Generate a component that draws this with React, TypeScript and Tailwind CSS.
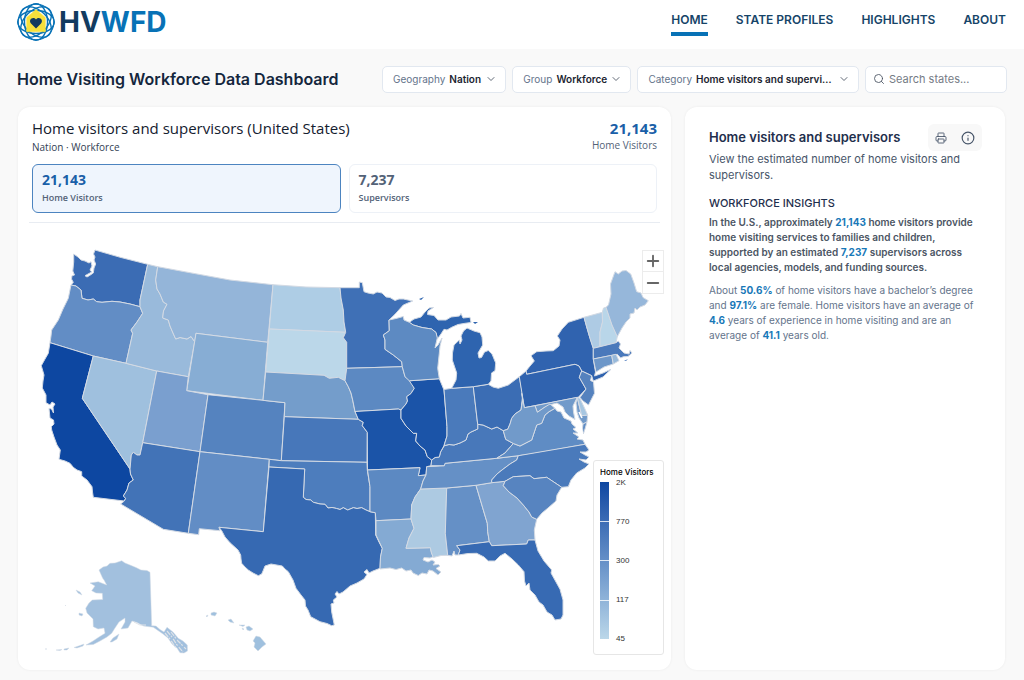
import React from "react";
import { ChevronDown, Info, Minus, Plus, Printer, Search } from "lucide-react";

type Region = { id: string; fill: string; d: string };

const regions: Region[] = [
  { id: "Washington", fill: "#3b6cb4", d: "M73.7 254L78 257 81 260 85 261 89 263 91 261.7 92 266 90 270 91.7 272 85 275.7 87 277 89.3 275.7 93.3 273 94 268 95.7 264 94 260 95 257 93.5 254 95 250 121 257.5 147.7 264.3 140 300 140 306.7 130 304 120 302 112 301.3 102 302.3 96.7 301.7 93.3 299 88 300 82 298.3 81 290 76 286 71 285 73.3 282.3 71.5 279 72 275.7 74.5 275 72.8 271 73.7 262Z" },
  { id: "Oregon", fill: "#628dc5", d: "M71 285L76 286 81 290 82 298.3 88 300 93.3 299 96.7 301.7 102 302.3 112 301.3 120 302 130 304 140 306.7 142.7 313.3 137 322 131 330 132.7 333.3 126 363.3 93.3 356 50 342.7 51 336 51.7 330 55 325 58.3 320 63 309 68.3 298.3Z" },
  { id: "California", fill: "#0d47a1", d: "M50 342.7L93.3 356 82.3 398.3 130 469 130.5 474 133.3 480 129 483 127 490 123.3 496 125.7 498.3 124.3 501 93.3 497.3 92.5 492 92 486.7 87 480 81.7 476 81.7 471.7 77 470 73.3 467.3 70 463.3 65 461 59 459.3 60.3 450 57 445 54 437 51.7 430 51.3 426.7 54 424 53.5 420 50 418 49 408.3 51.5 409 53.5 413 53 407 55 404 52 402 50 405 46 402.7 46 395 42.3 388 43 381 44 375 41.3 365.7 45 359 48.3 353.3Z" },
  { id: "Nevada", fill: "#9fc0de", d: "M93.3 356L126 363.3 156.7 371 142.7 442.7 140 455 137 455 133.3 452.3 131.3 455 130 469 82.3 398.3Z" },
  { id: "Idaho", fill: "#99badb", d: "M147.7 264.3L157.7 266.7 155.7 280 157 289 160 294 163.3 302 167 304.3 163.5 311 162.7 318 168.3 320 170 326 173 333 175.7 339 180 337.5 187 339 191 336.5 194.7 341.7 188.3 376.7 156.7 371 126 363.3 132.7 333.3 131 330 137 322 142.7 313.3 140 306.7 140 300Z" },
  { id: "Montana", fill: "#94b5d9", d: "M157.7 266.7L190 272.7 230 280 273 284.7 267.7 342.3 196 333.3 194.7 341.7 191 336.5 187 339 180 337.5 175.7 339 173 333 170 326 168.3 320 162.7 318 163.5 311 167 304.3 163.3 302 160 294 157 289 155.7 280Z" },
  { id: "Wyoming", fill: "#87add4", d: "M196 333.3L267.7 342.3 263 400.3 186.7 390.7Z" },
  { id: "Utah", fill: "#7a9fcf", d: "M156.7 371L188.3 376.7 186.7 390.7 208 394.7 200 451.7 142.7 442.7Z" },
  { id: "Colorado", fill: "#5583bf", d: "M208 394.7L263 400.3 285 402.7 281.3 460.7 269.3 459.3 200 451.7Z" },
  { id: "Arizona", fill: "#4273b7", d: "M142.7 442.7L200 451.7 188.3 533.3 163.3 529.3 120.7 504 124.3 501 125.7 498.3 123.3 496 127 490 129 483 133.3 480 130.5 474 130 469 131.3 455 133.3 452.3 137 455 140 455Z" },
  { id: "New Mexico", fill: "#628dc5", d: "M200 451.7L269.3 459.3 263.3 531.7 219 527.3 220 530.7 199.3 528.7 198.7 534.7 188.3 533.3Z" },
  { id: "North Dakota", fill: "#aecde5", d: "M273 284.7L306 287 340 287.7 341 298 343.3 310 344 322 345.7 332.3 269.3 329Z" },
  { id: "South Dakota", fill: "#bbd7e9", d: "M269.3 329L345.7 332.3 343.3 337.7 346.7 342.3 346.7 368.3 345 380.7 338.3 377.3 329.3 378.3 324 375.3 265.7 372Z" },
  { id: "Nebraska", fill: "#749dcb", d: "M265.7 372L324 375.3 329.3 378.3 338.3 377.3 345 380.7 348.3 386.7 351 393 352.7 400 355 411.7 358.3 419.3 284.3 416.7 285 402.7 263 400.3Z" },
  { id: "Kansas", fill: "#4777ba", d: "M284.3 416.7L358.3 419.3 363.3 422.3 362.3 425.7 367.3 432.3 367 462.3 281.3 460.7Z" },
  { id: "Oklahoma", fill: "#4d7dbd", d: "M269.3 459.3L281.3 460.7 367 462.3 367.3 470 370 486.7 370 511.7 366 510 361.7 507.7 357 508.5 353.3 507.7 347.7 510 343.3 507.7 340 509.5 336.7 508.5 332 507.5 328 508 325 504.3 320 504 313.3 502.3 310.7 500 306 499.5 303.3 497.3 304.7 469 269 467Z" },
  { id: "Texas", fill: "#3669b2", d: "M269 467L304.7 469 303.3 497.3 306 499.5 310.7 500 313.3 502.3 320 504 325 504.3 328 508 332 507.5 336.7 508.5 340 509.5 343.3 507.7 347.7 510 353.3 507.7 357 508.5 361.7 507.7 366 510 370 511.7 375.3 512.7 375.7 535 379 542 382.3 548.3 380.5 557 380 568.3 373 571 369 573 367 569.5 364 572 367 574.5 364 579 357 583 350 586 343 592 339 594 337 591.5 335 594 337 597 333.3 600 334 603 331 604 331.7 612 334.3 625 331.7 625.7 327 623.5 320 621.7 315 619 310.7 616.7 308 610 305.5 606 305 600 301 595 296 588.3 293 580 288.3 571.7 285 569 282.3 566 271 564 265 566 263 571 261.7 574 258.3 575.7 253 573 248.3 570 245 567 241.7 563.3 241 559 240.7 555 238 550 230 542.7 225 537 221.7 530.7 219 527.3 263.3 531.7Z" },
  { id: "Minnesota", fill: "#3f70b6", d: "M340 287.7L359.3 287.7 359.3 282 362.3 282.7 364 291.7 368 293 373.3 294 377 292 382 293 386 297 390 297.5 395 300.5 399 299 403.3 299 412.7 301 403.3 305 395 314.3 389 320 389.3 330.7 383.3 335 385 340 385 349.3 393.3 355 401.7 361.7 402.3 366.7 346.7 368.3 346.7 342.3 343.3 337.7 345.7 332.3 344 322 343.3 310 341 298Z" },
  { id: "Iowa", fill: "#5c89c2", d: "M346.7 368.3L402.3 366.7 405 376.7 410.7 380.7 414.3 388.3 411 393.5 406.7 396.7 407.5 401 406 404 401 410 398.3 409 355 411.5 352.7 400 351 393 348.3 386.7 345 380.7Z" },
  { id: "Missouri", fill: "#1b54a8", d: "M355 411.5L398.3 409 401 410 401 418.3 406 426 410 430 413.3 433.3 416.7 433.3 415.7 441 420 446 425 450 427.3 456.7 431.7 460 431 465.7 426.7 466.7 426 475 418.3 475.7 420 467.7 367.5 470 367.3 432.3 362.3 425.7 363.3 422.3 358.3 419.3Z" },
  { id: "Arkansas", fill: "#5c89c2", d: "M367.5 470L420 467.7 418.3 475.7 426 475 423 481 420.7 488.8 415 497 411.7 505 411 519 376 520.7 375.3 512.7 370 511.7 370 486.7Z" },
  { id: "Louisiana", fill: "#84aad3", d: "M376 520.7L411 519 414 528.3 409 538 406 548.3 430.3 547.7 431.5 553 433.3 556.7 430 558 424 557.5 423 560 428 562 432 560 435 562 433 565 438.3 564.5 440 566 436 568.5 441 572 438 575 433 571 429 570 427 574 422 573 418.3 575.5 413 573 411 570 406 571 401.7 568 396 569.5 390 568 380 569 380.5 557 382.3 548.3 376 535Z" },
  { id: "Mississippi", fill: "#adcae2", d: "M420.7 489L446.7 488 445.3 533.3 447.7 555.3 441 555.5 433.3 557.5 431.5 553 430.3 547.7 406 548.3 409 538 414 528.3 411 519 411.7 505 415 497Z" },
  { id: "Alabama", fill: "#6590c6", d: "M446.7 488L476 485.3 487.3 523.3 487.7 531.7 489.3 541.7 456.7 545.7 460 550 458.3 555 455 555 454 551 452 556 447.7 555.3 445.3 533.3Z" },
  { id: "Georgia", fill: "#80a4d0", d: "M476 485.3L491.7 482.7 505 481.3 503.3 485.7 509 492 517 498 523.3 505 529 512 531.7 517 536.7 519.3 534.3 530 535 540 528.3 540 526.7 544 491.7 545.7 489.3 541.7 487.7 531.7 487.3 523.3Z" },
  { id: "Florida", fill: "#376ab3", d: "M456.7 545.7L489.3 541.7 491.7 545.7 526.7 544 528.3 540 535 540 538 551 544 561 551.7 570 551 573 556 582 560 589.3 563 600 563 615 561 619 555 620 552 615 547 612 543 605 539 602 535 595 530 590 529 583 526 586 524.5 581 524 571.7 518.3 565 512 559 505 553.3 500 556 495 561 488.3 561 484 557 476.7 553.3 468 553.5 458.3 555 460 550Z" },
  { id: "Tennessee", fill: "#6590c6", d: "M426.7 466.7L444.3 465.7 445 463.3 496.7 458.3 518.3 455.7 516.7 460 510 464 502 470 497 474 491.7 480 491.7 482.7 476 485.3 446.7 488 420.7 489 423 481 426 475Z" },
  { id: "Kentucky", fill: "#4878ba", d: "M431.7 460L435 457.5 439.3 457 440.5 452 444.3 445.7 449 444.5 454 445 460 443 466 440 468 434 471 432 477.7 429 477.7 424.3 483 425 491.7 429 497 427 503.3 430.7 505.7 439.3 513.3 443.5 505 453 496.7 458.3 445 463.3 444.3 465.7 431 465.7Z" },
  { id: "Illinois", fill: "#1b54a8", d: "M409.3 380.8L439.3 378.7 444 390 447 426.7 447 436 444 445.7 440.5 452 439.3 457 435 457.5 431.7 460 427.3 456.7 425 450 420 446 415.7 441 416.7 433.3 413.3 433.3 410 430 406 426 401 418.3 401 410 406 404 407.5 401 406.7 396.7 411 393.5 414.3 388.3Z" },
  { id: "Indiana", fill: "#4a7abb", d: "M444 389.5L451.7 388.3 473.3 386.7 477.7 424.3 477.7 429 471 432 468 434 466 440 460 443 454 445 449 444.5 444 445.7 447 436 447 426.7Z" },
  { id: "Ohio", fill: "#3b6db4", d: "M473.3 386.7L488.3 384.3 493 387 498.3 388.3 508.3 385 519.3 376.7 522.7 395 521 410 515 414 511.7 418.3 510 424 507.7 429.3 503.3 430.7 497 427 491.7 429 483 425 477.7 424.3Z" },
  { id: "Michigan", fill: "#2e64af", d: "M451.7 388.3L456 380 456.7 373 452.3 360 452.5 353 454 345 459.3 340 460 344 462 340 461 336 463.5 331 467 328 474 331 480 332.7 482 337 482.7 345 478 353 479 358 481.5 357.5 484.5 352 488.3 350.5 492 354 495.7 363 495 370.7 491.5 373 491 381 488.3 384.3 473.3 386.7ZM409.3 322.3L414 319 421 317 425 312 429 308 433.5 307.5 428 311 427.5 314.5 434 315.5 438 320 446 320 451 317 459.5 316 461 313.5 463 318 470 317.3 471 322.5 465 323.3 458 324.5 451.7 327.3 447 330 444 329.3 441 334 437.3 339 436 332.5 431.7 329 422 327.5 413.3 325Z" },
  { id: "Wisconsin", fill: "#5d8ac2", d: "M389 320L396 318.5 403.3 316.5 404 320 409.3 322.3 413.3 325 422 327.5 431.7 329 436 332.5 437.3 338 435 348 438 345 442 338 440 346 439.3 353.3 437.7 368.3 439.3 378.7 409.3 380.8 405 376.7 402.3 366.7 401.7 361.7 393.3 355 385 349.3 385 340 383.3 335 389.3 330.7Z" },
  { id: "New York", fill: "#3063af", d: "M526 371L530 366 534.3 361 531 355.7 536.7 351.7 546 351 553.3 350.7 559 346 560 340 557.3 336 562 329 568.3 322.3 584 317.3 587 328 590 338.3 593.3 348.3 593.3 359 595.5 372 594.5 376 603 373 611 369.3 603 377 593.3 381 591.7 375.7 581.7 371 579 366 575 364.3 526.7 374.3Z" },
  { id: "Pennsylvania", fill: "#3063af", d: "M519.3 376.7L526 371 526.7 374.3 575 364.3 579 366 581.7 371 579.3 377.3 586 389 578.3 397.3 524.3 407.7Z" },
  { id: "New Jersey", fill: "#5582be", d: "M581.7 371L591.7 375.7 590.5 380.5 593.5 382 594.5 393.3 588.5 405 583 401 580 397.5 586 389 579.3 377.3Z" },
  { id: "Vermont", fill: "#aecbe4", d: "M584 317.3L602.3 312.3 602.5 322 600 332 600 346.7 593.3 348.3 590 338.3 587 328Z" },
  { id: "New Hampshire", fill: "#b9d6e9", d: "M602.3 312.3L603.5 308 606 307.3 612 325 617.3 336.7 616 342.7 600 346.7 600 332 602.5 322Z" },
  { id: "Maine", fill: "#96b7da", d: "M606 307.3L608.5 305 611 294 610.5 284 615 271.7 618.3 274 622 271 626 270.5 630.7 274 634 283 636.7 291.7 641 293 643 297.5 648.3 300.7 645 305 640 307 637 310 635 308 634 313 630 314 630 318 626 322 622 328 617.3 336.7 612 325Z" },
  { id: "Massachusetts", fill: "#4a79bb", d: "M593.3 348.3L600 346.7 616 342.7 618.3 341 620.5 344 619 348 624 353 629 354 630 350.5 632 353 628 356.5 623.3 356.7 620.7 358 617.3 354.3 593.3 359Z" },
  { id: "Connecticut", fill: "#6d97c9", d: "M593.3 359L611.7 355.3 613.3 364 604 367 596 372Z" },
  { id: "Rhode Island", fill: "#97b9da", d: "M611.7 355.3L616 354.3 619 360.7 613.3 364Z" },
  { id: "Maryland", fill: "#719aca", d: "M535 405.7L577.3 397.3 573 406 573.5 412 575 419.5 569 416 565 412 563 407 557 403 551 404.5 545 407 537.3 412.3ZM577.3 398L581.7 415.7 587.7 415 587 422 583 424 579 418 577 412 576 403Z" },
  { id: "Delaware", fill: "#a6c6e1", d: "M577.3 397.3L580 398.5 584 407 587.7 415 581.7 415.7Z" },
  { id: "Virginia", fill: "#5f8cc4", d: "M496.7 458.3L505 453 513.3 443.5 520 446 531.7 440 534 433 536.7 425 541.7 423.3 545 415 549 411.7 555 408.3 557 411 561 412 564 418 571 421 572 424 576 427.5 573 429 578 433 573 433 579 437 577 439 583 440 585 444.3 530 454.3ZM587 422L585 429 583.3 434 582.5 428 583 424Z" },
  { id: "West Virginia", fill: "#719aca", d: "M521.7 393.3L524.3 407.7 535 405.7 537.3 412.3 545 407 550 404 555 408.3 549 411.7 545 415 541.7 423.3 536.7 425 534 433 531.7 440 520 446 513.3 443.5 505.7 439.3 503.3 430.7 507.7 429.3 510 424 511.7 418.3 515 414 521 410 522.7 400Z" },
  { id: "North Carolina", fill: "#4a7abb", d: "M518.3 455.7L585 444.3 589 450 586 452 580 452 585 455 589 457 586 460 579 459 584 462 589 464 585 468 576.7 473 571 480 568.3 486.7 561.7 487.3 546.7 477.3 534 478.7 530 475.7 513.3 476.7 505 481.3 491.7 482.7 491.7 480 497 474 502 470 510 464 516.7 460Z" },
  { id: "South Carolina", fill: "#5784c0", d: "M505 481.3L513.3 476.7 530 475.7 534 478.7 546.7 477.3 561.7 487.3 557 495 556 501 548 508 542 513 536.7 519.3 531.7 517 529 512 523.3 505 517 498 509 492 503.3 485.7Z" },
  { id: "Alaska", fill: "#a2c0de", d: "M99 570L103 567 107 566 110 563.3 115 563 121.7 560.7 125 563 130 565 136 567.5 141 570 147 570.5 150 572.3 151.7 625.7 156 626 160 629.5 164 632 167 627.3 173 632 178.3 638.3 183 641 187.3 645 187.5 651 184 653 180 652.7 177 648 172 644 168 638 163 634 153.3 627.3 143.3 626 137 622.5 132 621 128 628 121 629 125 622 125 618 119 622 115 628 111.7 633.3 107 637 100 641 93.3 644.5 86 645 93 641 99 637 105 633.3 104 628 98 629 93.3 626.7 93 619 91 617 87 613 85.7 608.3 89 603 92.3 600 102.7 599.5 102.3 593.3 96 593 91.7 590.7 95 586 90 583 98.3 581.7 106.7 585 104 580 102.7 578.3Z" },
  { id: "Alaska islands", fill: "#a2c0de", d: "M110 642L113 638 119 634 117 639 112 642ZM79 613L83 614 82 616 79 615ZM76 590L80 592 82 595 78 593ZM74 647.5L80 645.5 84 644 83 646 77 648ZM64 649L69 648 67 650 64 650ZM56 650L62 649.5 60 650.5ZM45 649L47 649ZM65 605L66 606Z" },
  { id: "Hawaii", fill: "#9fc0de", d: "M211 613L214 612 217 613 215 616 211 615ZM206 616L208 615 207 617ZM228 620L231 619 234 623 230 622ZM239 625L245 625 243 626.5ZM246 627L249 626 253 629 250 631 247 630ZM242 628L244 629 243 630ZM256 636L260 637 266 644 262 647 258 651 254 647 255 643 253 641Z" },
];

const ticks = ["2K", "770", "300", "117", "45"];

function Filter({ id, label, options, size }: { id: string; label: string; options: string[]; size: string }) {
  return (
    <div className="relative flex h-[27px] items-center rounded-[5px] border border-[#e2e8f0] bg-white pl-[10px] text-[10px]">
      <label htmlFor={id} className="pr-1 text-[#64748b]">{label}</label>
      <select id={id} className={`${size} h-full cursor-pointer appearance-none truncate bg-transparent font-semibold text-[#1b2430] outline-none`}>
        {options.map((o) => <option key={o}>{o}</option>)}
      </select>
      <ChevronDown className="pointer-events-none absolute right-2 size-3 text-[#4b5563]" strokeWidth={1.75} />
    </div>
  );
}

function Logo() {
  return (
    <a href="#home" aria-label="HVWFD" className="flex items-center gap-[3px]">
      <svg viewBox="-20 -20 40 40" className="size-10" aria-hidden="true">
        <g fill="none" stroke="#0872b6" strokeWidth="1.4">
          {[0, 45, 90, 135].map((a) => <ellipse key={a} rx="18.3" ry="11.5" transform={`rotate(${a})`} />)}
          <circle r="17.8" strokeWidth="1.1" />
        </g>
        <path d="M0-12.6L9.4-4.6V9.8H-9.4V-4.6Z" fill="#f7e03c" stroke="#f7e03c" strokeWidth=".4" />
        <path d="M0 6.4L-5 1.4C-8-2-3.2-6.1 0-2.6 3.2-6.1 8-2 5 1.4Z" fill="#12395f" />
      </svg>
      <span className="text-[28px] leading-none font-bold text-[#123b60]">HV<span className="text-[#0872b6]">WFD</span></span>
    </a>
  );
}

function Num({ children }: { children: React.ReactNode }) {
  return <strong className="font-bold text-[#1878b8]">{children}</strong>;
}

export default function App() {
  const nav = ["HOME", "STATE PROFILES", "HIGHLIGHTS", "ABOUT"];
  return (
    <div className="min-h-screen bg-[#f9f9f9] font-['Inter',sans-serif] text-[#1e293b]">
      <header className="flex h-[49px] items-start justify-between bg-white pr-[18px] pl-4">
        <div className="pt-[2px]"><Logo /></div>
        <nav className="flex gap-7 pt-3 text-[12px] leading-4 font-semibold text-[#164468]">
          {nav.map((n, i) => (
            <a key={n} href="#home" className={i === 0 ? "border-b-4 border-[#0872b6] pb-1" : "pb-1"}>{n}</a>
          ))}
        </nav>
      </header>

      <main className="px-[17px] pb-[9px]">
        <div className="flex h-[58px] items-center justify-between pt-[2px]">
          <h1 className="text-[16px] font-semibold whitespace-nowrap text-[#14263d]">Home Visiting Workforce Data Dashboard</h1>
          <div className="flex gap-[6px]">
            <Filter id="geo" label="Geography" options={["Nation", "State"]} size="w-[56px] pr-5" />
            <Filter id="group" label="Group" options={["Workforce", "Families"]} size="w-[74px] pr-5" />
            <Filter id="cat" label="Category" options={["Home visitors and supervisors", "Education"]} size="w-[162px] pr-[26px]" />
            <div className="relative flex h-[27px] items-center">
              <Search className="absolute left-2 size-3 text-[#4b5563]" strokeWidth={1.75} />
              <input aria-label="Search states" placeholder="Search states..." className="h-full w-[142px] rounded-[5px] border border-[#e2e8f0] bg-white pr-2 pl-[23px] text-[11px] outline-none placeholder:text-[#757b85]" />
            </div>
          </div>
        </div>

        <div className="grid grid-cols-[minmax(0,1fr)_320px] gap-[14px] pr-[2px] pl-px">
          <section className="rounded-xl bg-white font-['Open_Sans','Noto_Sans',sans-serif] shadow-[0_0_3px_rgba(0,0,0,0.06)]">
            <div className="mx-[14px] flex justify-between pt-[11px]">
              <div>
                <h2 className="text-[15px] leading-5 font-medium text-[#14202f]">Home visitors and supervisors (United States)</h2>
                <p className="text-[10px] leading-[18px] text-[#334155]">Nation · Workforce</p>
              </div>
              <div className="text-right">
                <p className="text-[15px] leading-5 font-bold text-[#1a5fa8]">21,143</p>
                <p className="text-[10px] leading-[14px] font-medium text-[#536277]">Home Visitors</p>
              </div>
            </div>
            <div className="mx-[14px] mt-2 grid grid-cols-2 gap-2">
              <button className="flex h-[49px] flex-col justify-center rounded-md border border-[#4c84c0] bg-[#eff5fd] px-[9px] text-left">
                <span className="text-[14px] leading-[18px] font-bold text-[#1a5fa8]">21,143</span>
                <span className="text-[9px] leading-[18px] font-semibold text-[#536277]">Home Visitors</span>
              </button>
              <button className="flex h-[49px] flex-col justify-center rounded-md border border-[#edf1f7] bg-white px-[9px] text-left">
                <span className="text-[14px] leading-[18px] font-bold text-[#536277]">7,237</span>
                <span className="text-[9px] leading-[18px] font-semibold text-[#536277]">Supervisors</span>
              </button>
            </div>
            <hr className="mx-[11px] mt-[9px] border-[#e8ecf2]" />
            <div className="relative">
              <svg viewBox="18 223 653 447" className="block w-full" role="img" aria-label="Home visitors by state">
                <g stroke="#d3dae4" strokeLinejoin="round">
                  {regions.map((r) => <path key={r.id} d={r.d} fill={r.fill} strokeWidth={r.id.startsWith("Alaska") || r.id === "Hawaii" ? 0.5 : 1} />)}
                </g>
                <path d="M167 631L172 637 177 645 183 652M171 632L178 641 186 649M165 633L170 639 176 648" fill="none" stroke="#dfe3e8" strokeWidth="1.2" strokeDasharray="5 1 2 2" />
                <path d="M134 622L140 625 146 625" fill="none" stroke="#dfe3e8" strokeWidth="1" />
                <path d="M419 299L424 297 421 300ZM473 322L478 322 475 324Z" fill="#2e64af" />
                <path d="M624 361L628 359 626 361Z" fill="#4a79bb" />
                <path d="M580 422L583 438M582 418L579 412" stroke="#fff" strokeWidth="1.6" fill="none" />
              </svg>
              <div className="absolute top-[27px] right-[7px] flex w-[22px] flex-col divide-y divide-[#ececec] border border-[#ececec] bg-white text-[#666]">
                <button aria-label="Zoom in" className="flex h-[21px] items-center justify-center"><Plus className="size-[18px]" strokeWidth={2.5} /></button>
                <button aria-label="Zoom out" className="flex h-[21px] items-center justify-center"><Minus className="size-[18px]" strokeWidth={2.5} /></button>
              </div>
              <div className="absolute right-[7px] bottom-[15px] h-[195px] w-[71px] rounded-[3px] border border-[#e6e6e6] bg-white px-[6px] pt-[6px] font-['Liberation_Sans',sans-serif] text-[#333]">
                <p className="font-['Inter',sans-serif] text-[8px] leading-[11px] font-medium whitespace-nowrap text-black">Home Visitors</p>
                <div className="mt-1 flex gap-[7px]">
                  <div className="flex h-[157px] w-[9px] flex-col divide-y divide-white/80 bg-linear-to-b from-[#0d47a1] to-[#bbd7e9]">
                    {[0, 1, 2, 3].map((n) => <span key={n} className="flex-1" />)}
                  </div>
                  <div className="-my-1 flex flex-col justify-between text-[8px] leading-[9px]">
                    {ticks.map((t) => <span key={t}>{t}</span>)}
                  </div>
                </div>
              </div>
            </div>
          </section>

          <aside className="rounded-xl bg-white pt-[17px] pr-[23px] pl-6 shadow-[0_0_3px_rgba(0,0,0,0.06)]">
            <div className="flex items-center justify-between">
              <h2 className="text-[13px] font-semibold text-[#1f2f4d]">Home visitors and supervisors</h2>
              <div className="flex h-[27px] w-[54px] items-center justify-around rounded-md bg-[#f8f8f8] text-[#475569]">
                <button aria-label="Print"><Printer className="size-3" strokeWidth={1.75} /></button>
                <button aria-label="Information"><Info className="size-[14px]" strokeWidth={2} /></button>
              </div>
            </div>
            <p className="text-[11px] leading-4 text-[#475569]">View the estimated number of home visitors and supervisors.</p>
            <h3 className="mt-3 text-[11px] leading-4 font-medium text-[#1f2f4d]">WORKFORCE INSIGHTS</h3>
            <p className="mt-1 text-[10px] leading-[15px] font-semibold text-[#4b5563]">In the U.S., approximately <Num>21,143</Num> home visitors provide home visiting services to families and children, supported by an estimated <Num>7,237</Num> supervisors across local agencies, models, and funding sources.</p>
            <p className="mt-2 text-[10px] leading-[15px] text-[#64748b]">About <Num>50.6%</Num> of home visitors have a bachelor’s degree and <Num>97.1%</Num> are female. Home visitors have an average of <Num>4.6</Num> years of experience in home visiting and are an average of <Num>41.1</Num> years old.</p>
          </aside>
        </div>
      </main>
    </div>
  );
}
